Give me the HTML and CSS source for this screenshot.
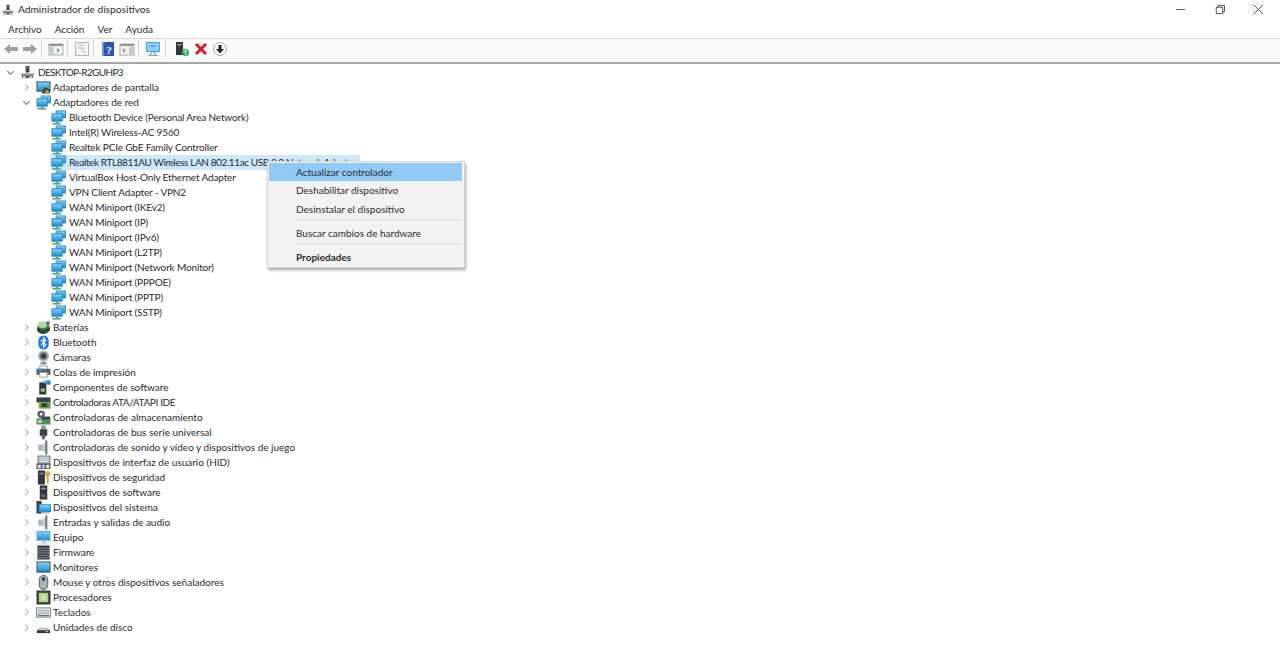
FILE: index.html
```html
<!DOCTYPE html>
<html lang="es">
<head>
<meta charset="utf-8">
<title>Administrador de dispositivos</title>
<link rel="stylesheet" href="styles.css">
</head>
<body>
<svg class="defs" width="0" height="0">
  <defs>
    <linearGradient id="blue" x1="0" y1="0" x2="0" y2="1"><stop offset="0" stop-color="#7fd0f5"/><stop offset="1" stop-color="#1f8fd0"/></linearGradient>
    <symbol id="pc" viewBox="0 0 16 16"><rect x="6" y="1" width="4" height="7" fill="#3c4147"/><rect x="7" y="2.5" width="2" height="1" fill="#b8bcc0"/><rect x="1" y="9" width="14" height="2" fill="#8d9399"/><rect x="2" y="11" width="12" height="3" fill="#50565c"/><rect x="3" y="12" width="3" height="2" fill="#d5d8da"/><rect x="10" y="12" width="3" height="2" fill="#d5d8da"/></symbol>
    <symbol id="net" viewBox="0 0 16 16"><rect x="5" y="0.500" width="11" height="8.500" fill="#3f8fc4"/><rect x="6" y="1.500" width="9" height="6.500" fill="url(#blue)"/><rect x="0.500" y="3.500" width="12" height="9" fill="#2f84bd"/><rect x="1.500" y="4.500" width="10" height="7" fill="url(#blue)"/><rect x="5" y="12.500" width="3" height="1.500" fill="#6aa777"/><rect x="1.500" y="14" width="9" height="1.500" fill="#4a9a62"/></symbol>
    <symbol id="display" viewBox="0 0 16 16"><rect x="0.500" y="1.500" width="15" height="11" fill="#33485a"/><rect x="1.500" y="2.500" width="13" height="9" fill="url(#blue)"/><path d="M6 14.500l3-7 6 2.500v4.500z" fill="#3d4a2c"/><path d="M9 14l2-3.500 2 1 1.500 2.500H8z" fill="#b9a04a"/></symbol>
    <symbol id="battery" viewBox="0 0 16 16"><ellipse cx="8" cy="9" rx="7" ry="6" fill="#3e7f4e"/><ellipse cx="7" cy="5" rx="5" ry="3.500" fill="#aed6a4"/><path d="M1.500 8l5.500 3 7.500-3v3l-7.500 4-5.500-3z" fill="#2d3e33"/><rect x="11" y="1.500" width="3.500" height="3.500" fill="#5f6a6e"/></symbol>
    <symbol id="bt" viewBox="0 0 16 16"><rect x="2.500" y="0.500" width="11" height="15" rx="5.500" fill="#1478e0"/><path d="M5.200 5.200L10.500 10.400 8 13V3l2.500 2.600L5.200 10.800" fill="none" stroke="#fff" stroke-width="1.200"/></symbol>
    <symbol id="cam" viewBox="0 0 16 16"><circle cx="8" cy="6.500" r="6" fill="#b6babd"/><circle cx="8" cy="6.500" r="4" fill="#5f666b"/><circle cx="8" cy="6.500" r="1.800" fill="#23272b"/><path d="M4 15.500h8l-2-3H6z" fill="#8b9094"/></symbol>
    <symbol id="print" viewBox="0 0 16 16"><rect x="4" y="1" width="8" height="5" fill="#f4f6f8" stroke="#8a8f94" stroke-width=".8"/><rect x="0.500" y="4" width="15" height="6.500" fill="#59626a"/><rect x="0.500" y="4" width="6" height="2" fill="#2a9bd8"/><rect x="4" y="8" width="8" height="5" fill="#f4f6f8" stroke="#8a8f94" stroke-width=".8"/></symbol>
    <symbol id="comp" viewBox="0 0 16 16"><rect x="3.500" y="2.500" width="7.500" height="13" fill="#32373b"/><rect x="5" y="9" width="4.500" height="3.500" fill="#8ec26d"/><rect x="11" y="0.500" width="4.500" height="4.500" fill="#1e8ad0"/><rect x="8" y="0.500" width="3" height="3" fill="#62b6e6"/></symbol>
    <symbol id="ata" viewBox="0 0 16 16"><rect x="0.500" y="2.500" width="15" height="5.500" fill="#3d4449"/><rect x="3.500" y="8" width="12" height="6.500" fill="#5e9a52"/><rect x="6" y="9" width="6" height="3.500" fill="#26402a"/><rect x="2.500" y="8" width="2" height="5.500" fill="#c9a83f"/></symbol>
    <symbol id="storage" viewBox="0 0 16 16"><circle cx="5.500" cy="4.500" r="4" fill="#59636a"/><circle cx="5.500" cy="4.500" r="1.500" fill="#e6e8ea"/><rect x="0.500" y="9" width="15" height="6.500" fill="#50925a"/><rect x="6" y="7" width="9" height="3" fill="#39424a"/><rect x="2" y="11" width="4.500" height="2.500" fill="#d8dcc0"/></symbol>
    <symbol id="usb" viewBox="0 0 16 16"><rect x="5.500" y="0.500" width="5" height="4" fill="#8f959a"/><rect x="4" y="4.500" width="8" height="7" fill="#3d4348"/><path d="M5.500 11.500h5l-1.500 4H7z" fill="#62686d"/></symbol>
    <symbol id="audio" viewBox="0 0 16 16"><rect x="2.500" y="5" width="4.500" height="6.500" fill="#aeb3b6"/><path d="M7 5l5-4.500v15L7 11.500z" fill="#c6cacc"/><rect x="10" y="0.500" width="2" height="15" fill="#6d7377"/></symbol>
    <symbol id="hid" viewBox="0 0 16 16"><rect x="2" y="1" width="13" height="8" fill="#aeb6c2" stroke="#6e7680" stroke-width=".8"/><path d="M4 3h9M4 5h9M4 7h9" stroke="#eef0f3" stroke-width=".8"/><rect x="0.500" y="9" width="15" height="6" fill="#59626a"/><rect x="2" y="10.500" width="3" height="3.500" fill="#e6e8ea"/><rect x="7" y="10.500" width="2" height="3.500" fill="#e6e8ea"/><rect x="11" y="10.500" width="3" height="3.500" fill="#e6e8ea"/></symbol>
    <symbol id="sec" viewBox="0 0 16 16"><rect x="2" y="0.500" width="7.500" height="15" fill="#32373b"/><rect x="3.500" y="3" width="4.500" height="1.500" fill="#8d9398"/><circle cx="12.500" cy="4" r="3" fill="#e2b341"/><rect x="11.500" y="6" width="2" height="8.500" fill="#d0a030"/></symbol>
    <symbol id="soft" viewBox="0 0 16 16"><rect x="4" y="0.500" width="8" height="15" fill="#32373b"/><rect x="5.500" y="3" width="5" height="1.500" fill="#9aa0a5"/><rect x="5.500" y="10" width="5" height="3" fill="#5f666b"/></symbol>
    <symbol id="sys" viewBox="0 0 16 16"><rect x="0.500" y="1" width="5.500" height="13.500" fill="#3f464c"/><rect x="3" y="4.500" width="13" height="8.500" fill="#1f94d8"/><rect x="4" y="5.500" width="11" height="6.500" fill="url(#blue)"/><rect x="6" y="13" width="8" height="1.500" fill="#aab0b4"/></symbol>
    <symbol id="pcmon" viewBox="0 0 16 16"><rect x="0.500" y="1" width="15" height="10.500" fill="#5ea9d8"/><rect x="1.500" y="2" width="13" height="8.500" fill="url(#blue)"/><path d="M6 11.500h4l1 2.500H5z" fill="#c6cbce"/><rect x="1.500" y="14" width="13" height="1.500" fill="#dfe2e4"/></symbol>
    <symbol id="firm" viewBox="0 0 16 16"><rect x="1.500" y="0.500" width="13" height="15" fill="#3a3f44"/><path d="M1.500 3.500h13M1.500 6h13M1.500 8.500h13M1.500 11h13M1.500 13.500h13" stroke="#9ba0a4" stroke-width=".8"/></symbol>
    <symbol id="mon" viewBox="0 0 16 16"><rect x="0.500" y="1.500" width="15" height="12" fill="#4a5359"/><rect x="1.500" y="2.500" width="13" height="9.500" fill="url(#blue)"/></symbol>
    <symbol id="mouse" viewBox="0 0 16 16"><rect x="3.500" y="0.500" width="9" height="15" rx="4.500" fill="#aab0b5" stroke="#4e5459"/><rect x="6.500" y="2.500" width="3" height="4" rx="1" fill="#3f454a"/></symbol>
    <symbol id="cpu" viewBox="0 0 16 16"><rect x="0.500" y="0.500" width="15" height="15" fill="#39423a"/><rect x="3" y="3" width="10" height="10" fill="#b5cf8d"/><rect x="5.500" y="5.500" width="5" height="5" fill="#d4e2b2"/></symbol>
    <symbol id="kbd" viewBox="0 0 16 16"><rect x="0.500" y="3" width="15" height="10" fill="#dcdfe2" stroke="#82888d"/><path d="M2 6h12M2 8.500h12" stroke="#a6abaf" stroke-width="1"/><rect x="2" y="10.500" width="12" height="1.500" fill="#70767a"/></symbol>
    <symbol id="disk" viewBox="0 0 16 16"><path d="M3 8h10l2 3v2H1v-2z" fill="#c6cacd"/><rect x="1" y="11" width="14" height="3" fill="#2f3438"/><rect x="10" y="12" width="3" height="1" fill="#c6cacd"/></symbol>
  </defs>
</svg>

<header class="titlebar">
  <svg class="title-icon"><use href="#pc"/></svg>
  <span class="title-text">Administrador de dispositivos</span>
  <div class="win-controls">
    <svg class="win-btn" viewBox="0 0 12 12"><path d="M1 6h10" stroke="#555" fill="none"/></svg>
    <svg class="win-btn" viewBox="0 0 12 12"><path d="M2.500 3.500h7v7h-7zM4.500 3.500v-2h7v7h-2" stroke="#444" fill="none"/></svg>
    <svg class="win-btn" viewBox="0 0 12 12"><path d="M1 1l10 10M11 1L1 11" stroke="#444" fill="none"/></svg>
  </div>
</header>

<nav class="menubar">
  <span>Archivo</span><span>Acción</span><span>Ver</span><span>Ayuda</span>
</nav>

<div class="toolbar">
  <svg class="tool" viewBox="0 0 16 16"><path d="M1 8l6-5v3h8v4H7v3z" fill="#9aa0a3"/></svg>
  <svg class="tool" viewBox="0 0 16 16"><path d="M15 8L9 3v3H1v4h8v3z" fill="#9aa0a3"/></svg>
  <i class="sep"></i>
  <svg class="tool" viewBox="0 0 16 16"><rect x="1" y="3" width="14" height="11" fill="#f1f2f2" stroke="#a5a9ab"/><rect x="1" y="3" width="14" height="2" fill="#8d9397"/><rect x="2" y="6" width="4" height="7" fill="#c8cbcd"/><path d="M9 7l3 2.500L9 12z" fill="#7da77d"/></svg>
  <i class="sep"></i>
  <svg class="tool" viewBox="0 0 16 16"><rect x="1.500" y="1.500" width="13" height="13" fill="#f3f4f4" stroke="#b2b6b8"/><path d="M4 4h7M4 7h5v4h3" stroke="#a9c0ac" fill="none"/></svg>
  <i class="sep"></i>
  <svg class="tool" viewBox="0 0 16 16"><rect x="2" y="1" width="12" height="14" fill="#2c55b5"/><rect x="2" y="1" width="2" height="14" fill="#6f8fd8"/><text class="help-q" x="9" y="12.500" text-anchor="middle">?</text></svg>
  <svg class="tool" viewBox="0 0 16 16"><rect x="1" y="3" width="14" height="11" fill="#f1f2f2" stroke="#a5a9ab"/><rect x="1" y="3" width="14" height="2" fill="#8d9397"/><rect x="10" y="6" width="4" height="7" fill="#c8cbcd"/><path d="M4 7l3 2.500L4 12z" fill="#7da77d"/></svg>
  <i class="sep"></i>
  <svg class="tool" viewBox="0 0 16 16"><rect x="1" y="1" width="14" height="10" fill="#4aa3d8"/><rect x="2" y="2" width="12" height="8" fill="#8fd0f2"/><path d="M5 5h6M7 11l-2 3.500M9 11l2 3.500" stroke="#3d8fc4" fill="none"/><rect x="3" y="14" width="10" height="1" fill="#9aa0a3"/></svg>
  <i class="sep sep-wide"></i>
  <svg class="tool" viewBox="0 0 16 16"><rect x="2" y="1" width="7" height="13" fill="#33383c"/><rect x="3.500" y="3" width="4" height="1.500" fill="#9aa0a5"/><circle cx="11.500" cy="11.500" r="3.500" fill="#35a853"/><path d="M11.500 9v5M9.500 11l2-2 2 2" stroke="#c7efcf" fill="none"/></svg>
  <svg class="tool" viewBox="0 0 16 16"><path d="M3 3l10 10M13 3L3 13" stroke="#d3202a" stroke-width="3" fill="none"/></svg>
  <svg class="tool" viewBox="0 0 16 16"><circle cx="8" cy="8" r="6.500" fill="#f6f6f6" stroke="#a8acae"/><path d="M6.500 4h3v4H12l-4 4.500L4 8h2.500z" fill="#26292b"/></svg>
</div>

<main class="tree">
  <div class="row root"><span class="chev open"></span><svg class="ico"><use href="#pc"/></svg><span class="label">DESKTOP-R2GUHP3</span></div>
  <div class="row l1"><span class="chev"></span><svg class="ico"><use href="#display"/></svg><span class="label">Adaptadores de pantalla</span></div>
  <div class="row l1"><span class="chev open"></span><svg class="ico"><use href="#net"/></svg><span class="label">Adaptadores de red</span></div>
  <div class="row l2"><svg class="ico"><use href="#net"/></svg><span class="label">Bluetooth Device (Personal Area Network)</span></div>
  <div class="row l2"><svg class="ico"><use href="#net"/></svg><span class="label">Intel(R) Wireless-AC 9560</span></div>
  <div class="row l2"><svg class="ico"><use href="#net"/></svg><span class="label">Realtek PCIe GbE Family Controller</span></div>
  <div class="row l2 selected"><svg class="ico"><use href="#net"/></svg><span class="label">Realtek RTL8811AU Wireless LAN 802.11ac USB 2.0 Network Adapter</span></div>
  <div class="row l2"><svg class="ico"><use href="#net"/></svg><span class="label">VirtualBox Host-Only Ethernet Adapter</span></div>
  <div class="row l2"><svg class="ico"><use href="#net"/></svg><span class="label">VPN Client Adapter - VPN2</span></div>
  <div class="row l2"><svg class="ico"><use href="#net"/></svg><span class="label">WAN Miniport (IKEv2)</span></div>
  <div class="row l2"><svg class="ico"><use href="#net"/></svg><span class="label">WAN Miniport (IP)</span></div>
  <div class="row l2"><svg class="ico"><use href="#net"/></svg><span class="label">WAN Miniport (IPv6)</span></div>
  <div class="row l2"><svg class="ico"><use href="#net"/></svg><span class="label">WAN Miniport (L2TP)</span></div>
  <div class="row l2"><svg class="ico"><use href="#net"/></svg><span class="label">WAN Miniport (Network Monitor)</span></div>
  <div class="row l2"><svg class="ico"><use href="#net"/></svg><span class="label">WAN Miniport (PPPOE)</span></div>
  <div class="row l2"><svg class="ico"><use href="#net"/></svg><span class="label">WAN Miniport (PPTP)</span></div>
  <div class="row l2"><svg class="ico"><use href="#net"/></svg><span class="label">WAN Miniport (SSTP)</span></div>
  <div class="row l1"><span class="chev"></span><svg class="ico"><use href="#battery"/></svg><span class="label">Baterías</span></div>
  <div class="row l1"><span class="chev"></span><svg class="ico"><use href="#bt"/></svg><span class="label">Bluetooth</span></div>
  <div class="row l1"><span class="chev"></span><svg class="ico"><use href="#cam"/></svg><span class="label">Cámaras</span></div>
  <div class="row l1"><span class="chev"></span><svg class="ico"><use href="#print"/></svg><span class="label">Colas de impresión</span></div>
  <div class="row l1"><span class="chev"></span><svg class="ico"><use href="#comp"/></svg><span class="label">Componentes de software</span></div>
  <div class="row l1"><span class="chev"></span><svg class="ico"><use href="#ata"/></svg><span class="label caps">Controladoras ATA/ATAPI IDE</span></div>
  <div class="row l1"><span class="chev"></span><svg class="ico"><use href="#storage"/></svg><span class="label">Controladoras de almacenamiento</span></div>
  <div class="row l1"><span class="chev"></span><svg class="ico"><use href="#usb"/></svg><span class="label">Controladoras de bus serie universal</span></div>
  <div class="row l1"><span class="chev"></span><svg class="ico"><use href="#audio"/></svg><span class="label">Controladoras de sonido y vídeo y dispositivos de juego</span></div>
  <div class="row l1"><span class="chev"></span><svg class="ico"><use href="#hid"/></svg><span class="label">Dispositivos de interfaz de usuario (HID)</span></div>
  <div class="row l1"><span class="chev"></span><svg class="ico"><use href="#sec"/></svg><span class="label">Dispositivos de seguridad</span></div>
  <div class="row l1"><span class="chev"></span><svg class="ico"><use href="#soft"/></svg><span class="label">Dispositivos de software</span></div>
  <div class="row l1"><span class="chev"></span><svg class="ico"><use href="#sys"/></svg><span class="label">Dispositivos del sistema</span></div>
  <div class="row l1"><span class="chev"></span><svg class="ico"><use href="#audio"/></svg><span class="label">Entradas y salidas de audio</span></div>
  <div class="row l1"><span class="chev"></span><svg class="ico"><use href="#pcmon"/></svg><span class="label">Equipo</span></div>
  <div class="row l1"><span class="chev"></span><svg class="ico"><use href="#firm"/></svg><span class="label">Firmware</span></div>
  <div class="row l1"><span class="chev"></span><svg class="ico"><use href="#mon"/></svg><span class="label">Monitores</span></div>
  <div class="row l1"><span class="chev"></span><svg class="ico"><use href="#mouse"/></svg><span class="label">Mouse y otros dispositivos señaladores</span></div>
  <div class="row l1"><span class="chev"></span><svg class="ico"><use href="#cpu"/></svg><span class="label">Procesadores</span></div>
  <div class="row l1"><span class="chev"></span><svg class="ico"><use href="#kbd"/></svg><span class="label">Teclados</span></div>
  <div class="row l1"><span class="chev"></span><svg class="ico"><use href="#disk"/></svg><span class="label">Unidades de disco</span></div>
</main>

<div class="context-menu">
  <div class="item active">Actualizar controlador</div>
  <div class="item">Deshabilitar dispositivo</div>
  <div class="item">Desinstalar el dispositivo</div>
  <hr class="divider">
  <div class="item">Buscar cambios de hardware</div>
  <hr class="divider">
  <div class="item strong">Propiedades</div>
</div>
</body>
</html>
```
FILE: styles.css
```css
* { box-sizing: border-box; }
html, body { margin: 0; height: 100%; }
body {
  background: #fff;
  color: #2b2b2b;
  font: 10px/15px "Lato", "Open Sans", sans-serif;
  overflow: hidden;
  position: relative;
}
.defs { position: absolute; }
svg { display: block; flex: none; }

.titlebar { height: 19px; display: flex; align-items: center; padding-left: 2px; }
.title-icon { width: 12px; height: 14px; margin-right: 4px; }
.title-text { font-size: 10.2px; }
.win-controls { margin-left: auto; margin-right: 16px; display: flex; gap: 28px; }
.win-btn { width: 11px; height: 11px; }

.menubar {
  height: 20px;
  display: flex;
  align-items: center;
  gap: 13px;
  padding: 1px 0 0 8px;
  border-bottom: 1px solid #d9d9d9;
}

.toolbar {
  height: 25px;
  display: flex;
  align-items: center;
  gap: 3px;
  padding: 0 0 4px 3px;
  background: #fafafa;
  border-bottom: 2px solid #a5a5a5;
}
.tool { width: 16px; height: 16px; }
.sep { width: 1px; height: 17px; background: #d4d4d4; margin-right: 3px; }
.sep-wide { margin-left: 1px; margin-right: 5px; }
.help-q { font: bold 11px "Liberation Serif", serif; fill: #fff; }

.tree { padding-top: 1px; }
.row { height: 15px; display: flex; align-items: center; white-space: nowrap; }
.root { padding-left: 6px; letter-spacing: -.65px; }
.l1 { padding-left: 22px; }
.l2 { padding-left: 51px; letter-spacing: -.15px; }
.caps { letter-spacing: -.35px; }
.chev { width: 14px; height: 15px; flex: none; position: relative; }
.chev::after {
  content: "";
  position: absolute;
  left: 1px;
  top: 5px;
  width: 4px;
  height: 4px;
  border-top: 1px solid #b5b5b5;
  border-right: 1px solid #b5b5b5;
  transform: rotate(45deg);
}
.chev.open::after {
  border-color: #777;
  left: 2px;
  top: 4px;
  transform: rotate(135deg);
}
.ico { width: 15px; height: 15px; margin-right: 3px; }
.l1 .ico { margin-right: 2px; }
.selected { width: 360px; padding-left: 50px; background: #cde8fb; background-clip: content-box; letter-spacing: -.4px; }
.selected .ico { margin-left: 1px; }

.context-menu {
  position: absolute;
  left: 267px;
  top: 161px;
  width: 198px;
  height: 107px;
  padding: 1px;
  background: #f3f3f3;
  border: 1px solid #d2d2d2;
  box-shadow: 1px 2px 3px rgba(0, 0, 0, .35);
}
.item { height: 19px; line-height: 18px; padding-left: 27px; }
.item.active { background: #90c8f6; height: 18px; margin-right: 1px; }
.item.strong { font-weight: 700; }
.divider { height: 1px; border: 0; background: #dcdcdc; margin: 0 2px 0 27px; }
.divider + .item { margin-top: 4px; }
```
